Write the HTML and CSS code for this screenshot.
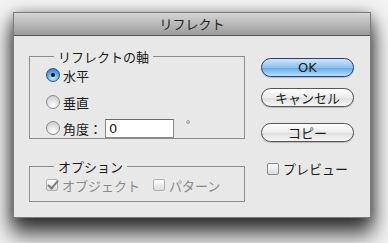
FILE: index.html
```html
<!DOCTYPE html>
<html lang="ja">
<head>
  <meta charset="UTF-8">
  <title>リフレクト</title>
  <link rel="stylesheet" href="styles.css">
</head>
<body>
  <div class="window">
    <div class="titlebar">リフレクト</div>
    <div class="content">
      <div class="left">
        <fieldset class="group axis">
          <legend>リフレクトの軸</legend>
          <div class="row"><span class="radio on"></span>水平</div>
          <div class="row"><span class="radio"></span>垂直</div>
          <div class="row">
            <span class="radio"></span>角度：
            <span class="field">0</span>
            <span class="deg">°</span>
          </div>
        </fieldset>
        <fieldset class="group options">
          <legend>オプション</legend>
          <div class="row dim">
            <span class="check on"></span>オブジェクト
            <span class="check gap"></span>パターン
          </div>
        </fieldset>
      </div>
      <div class="right">
        <div class="btn default">OK</div>
        <div class="btn">キャンセル</div>
        <div class="btn copy">コピー</div>
        <div class="preview"><span class="check"></span>プレビュー</div>
      </div>
    </div>
  </div>
</body>
</html>
```

FILE: styles.css
```css
html {
  background: #f3f3f3;
}
body {
  margin: 0;
  padding: 12px 0 0 13px;
  height: 243px;
  box-sizing: border-box;
  font-family: "Noto Sans CJK JP", "DejaVu Sans", sans-serif;
  font-size: 13px;
  color: #1a1a1a;
}
.window {
  width: 356px;
  height: 204px;
  border: 1px solid #7c7c7c;
  background: #e8e8e8;
  box-shadow: 0 14px 20px 2px rgba(0, 0, 0, 0.75), 0 2px 12px rgba(0, 0, 0, 0.35);
}
.titlebar {
  height: 22px;
  line-height: 22px;
  text-align: center;
  background: linear-gradient(#d6d6d6, #9b9b9b);
  border-bottom: 1px solid #565656;
  color: #222;
}
.content {
  display: flex;
  gap: 16px;
  padding: 13px 0 0 15px;
}
.left {
  width: 216px;
  display: flex;
  flex-direction: column;
  gap: 20px;
}
.group {
  margin: 0;
  border: 1px solid #8c8c8c;
  padding: 0 0 0 16px;
  min-width: 0;
}
.group legend {
  margin-left: 8px;
  padding: 0 4px;
  line-height: 15px;
}
.row {
  display: flex;
  align-items: center;
  height: 20px;
}
.axis .row:nth-of-type(1) {
  margin-top: 1px;
}
.axis .row:nth-of-type(2) {
  margin-top: 7px;
}
.axis .row:nth-of-type(3) {
  margin-top: 6px;
}
.radio {
  width: 14px;
  height: 14px;
  border-radius: 50%;
  border: 1px solid #8a8a8a;
  box-sizing: border-box;
  background: radial-gradient(circle at 50% 80%, #ffffff, #dcdcdc 60%, #c4c4c4);
  margin-right: 3px;
  position: relative;
}
.radio.on {
  border-color: #2b4f8a;
  background: radial-gradient(circle at 50% 75%, #c9ecff, #5aa4ea 55%, #2f6bc4);
}
.radio.on::after {
  content: "";
  position: absolute;
  left: 4px;
  top: 4px;
  width: 4px;
  height: 4px;
  border-radius: 50%;
  background: #111;
}
.field {
  width: 64px;
  height: 17px;
  margin-left: 3px;
  border: 1px solid #8a8a8a;
  border-top-color: #6a6a6a;
  background: #fff;
  padding-left: 3px;
  line-height: 17px;
  font-family: "DejaVu Sans", sans-serif;
}
.deg {
  margin-left: 12px;
  margin-top: -8px;
  font-size: 11px;
  color: #555;
}
.options {
  padding-bottom: 7px;
}
.options .row {
  height: 18px;
  margin-top: 2px;
}
.dim {
  color: #8a8a8a;
}
.check {
  width: 12px;
  height: 12px;
  box-sizing: border-box;
  border: 1px solid #8a8a8a;
  border-radius: 2px;
  background: linear-gradient(#fdfdfd, #dcdcdc);
  margin-right: 4px;
  position: relative;
}
.check.gap {
  margin-left: 13px;
  border-color: #b0b0b0;
}
.dim .check.on {
  border-color: #b0b0b0;
}
.check.on::after {
  content: "";
  position: absolute;
  left: 3px;
  top: -2px;
  width: 4px;
  height: 9px;
  border: solid #7d7d7d;
  border-width: 0 2px 2px 0;
  transform: rotate(40deg);
}
.right {
  padding-top: 9px;
  display: flex;
  flex-direction: column;
  width: 93px;
}
.btn {
  height: 17px;
  line-height: 17px;
  text-align: center;
  border: 1px solid #555;
  border-radius: 10px;
  background: linear-gradient(#ffffff, #ececec 50%, #dedede 51%, #f6f6f6);
  margin-bottom: 11px;
  box-shadow: 0 1px 1px rgba(0, 0, 0, 0.2);
}
.btn.default {
  border-color: #243f7a;
  background: linear-gradient(#cfe6fb, #8ec2f1 50%, #5fa7ea 51%, #b7e2ff);
  font-family: "DejaVu Sans", sans-serif;
}
.btn.copy {
  margin-top: 5px;
}
.preview {
  display: flex;
  align-items: center;
  margin: 6px 0 0 6px;
}
```
